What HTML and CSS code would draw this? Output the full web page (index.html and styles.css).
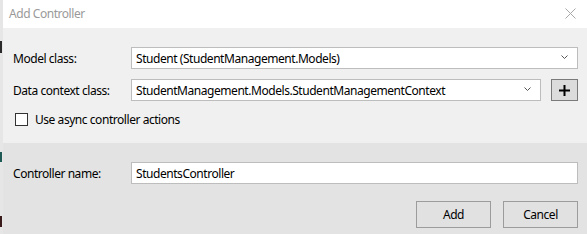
FILE: index.html
```html
<!DOCTYPE html>
<html>
<head>
<meta charset="utf-8">
<link rel="stylesheet" href="styles.css">
</head>
<body>
<div class="screen">
  <div class="behind">
    <span class="mark mark-a"></span>
    <span class="mark mark-b"></span>
    <span class="mark mark-c"></span>
  </div>
  <div class="dialog">
    <div class="titlebar">
      <span class="title">Add Controller</span>
      <svg class="close" width="11" height="11" viewBox="0 0 11 11"><path d="M0.5 0.5 L10.5 10.5 M10.5 0.5 L0.5 10.5" stroke="#a8a8a8" stroke-width="1" fill="none"/></svg>
    </div>
    <div class="upper">
      <div class="row">
        <label class="label">Model class:</label>
        <div class="combo">
          <span class="value">Student (StudentManagement.Models)</span>
          <svg class="chev" width="7" height="4" viewBox="0 0 7 4"><path d="M0.5 0.5 L3.5 3.5 L6.5 0.5" stroke="#555" stroke-width="1" fill="none"/></svg>
        </div>
      </div>
      <div class="row">
        <label class="label">Data context class:</label>
        <div class="combo">
          <span class="value">StudentManagement.Models.StudentManagementContext</span>
          <svg class="chev" width="7" height="4" viewBox="0 0 7 4"><path d="M0.5 0.5 L3.5 3.5 L6.5 0.5" stroke="#555" stroke-width="1" fill="none"/></svg>
        </div>
        <div class="plus">
          <svg width="11" height="11" viewBox="0 0 11 11"><path d="M5.5 0 V11 M0 5.5 H11" stroke="#000" stroke-width="2" fill="none"/></svg>
        </div>
      </div>
      <div class="check-row">
        <span class="checkbox"></span>
        <span class="check-label">Use async controller actions</span>
      </div>
    </div>
    <div class="lower">
      <div class="row">
        <label class="label">Controller name:</label>
        <div class="combo">
          <span class="value">StudentsController</span>
        </div>
      </div>
      <div class="buttons">
        <div class="btn">Add</div>
        <div class="btn">Cancel</div>
      </div>
    </div>
  </div>
</div>
</body>
</html>
```
FILE: styles.css
```css
html, body {
  margin: 0;
  padding: 0;
}
body {
  width: 587px;
  height: 234px;
  overflow: hidden;
  font-family: "Noto Sans", "Open Sans", sans-serif;
  font-size: 12px;
  letter-spacing: -0.45px;
  color: #000;
}
.screen {
  display: flex;
  width: 587px;
  height: 234px;
}
.behind {
  width: 3px;
  flex: none;
  background: #e6e6e6;
  position: relative;
}
.mark {
  position: absolute;
  left: 0;
  width: 2px;
}
.mark-a { top: 41px; height: 12px; background: #2a2a2a; }
.mark-b { top: 152px; height: 10px; background: #1f5a55; }
.mark-c { top: 216px; height: 11px; background: #3a1a1a; }
.dialog {
  flex: 1;
  display: flex;
  flex-direction: column;
}
.titlebar {
  height: 28px;
  flex: none;
  background: #fff;
  display: flex;
  align-items: center;
  justify-content: space-between;
  padding: 0 11px 0 6px;
}
.title {
  color: #9a9a9a;
  font-size: 12px;
  margin-top: -1px;
}
.close {
  margin-top: -1px;
}
.upper {
  background: #f0f0f0;
  padding: 19px 9px 17px 10px;
  display: flex;
  flex-direction: column;
  gap: 10px;
}
.row {
  display: flex;
  align-items: center;
  height: 22px;
}
.label {
  width: 118px;
  flex: none;
}
.combo {
  flex: 1;
  height: 22px;
  box-sizing: border-box;
  background: #fff;
  border: 1px solid #bdbdbd;
  display: flex;
  align-items: center;
  justify-content: space-between;
  padding: 0 9px 0 4px;
}
.value {
  white-space: nowrap;
}
.chev {
  margin-top: -2px;
}
.plus {
  width: 27px;
  height: 22px;
  box-sizing: border-box;
  margin-left: 10px;
  background: #dcdcdc;
  border: 1px solid #7a7a7a;
  display: flex;
  align-items: center;
  justify-content: center;
  flex: none;
}
.check-row {
  display: flex;
  align-items: center;
  margin-top: 2px;
  padding-left: 2px;
  gap: 7px;
  height: 13px;
}
.checkbox {
  width: 13px;
  height: 13px;
  box-sizing: border-box;
  border: 1px solid #333;
  background: #fff;
  flex: none;
}
.lower {
  flex: 1;
  background: #e3e3e3;
  padding: 19px 9px 0 10px;
  display: flex;
  flex-direction: column;
}
.buttons {
  display: flex;
  justify-content: flex-end;
  gap: 12px;
  margin-top: 17px;
}
.btn {
  width: 75px;
  height: 27px;
  box-sizing: border-box;
  background: #e1e1e1;
  border: 1px solid #9c9c9c;
  display: flex;
  align-items: center;
  justify-content: center;
}
```
